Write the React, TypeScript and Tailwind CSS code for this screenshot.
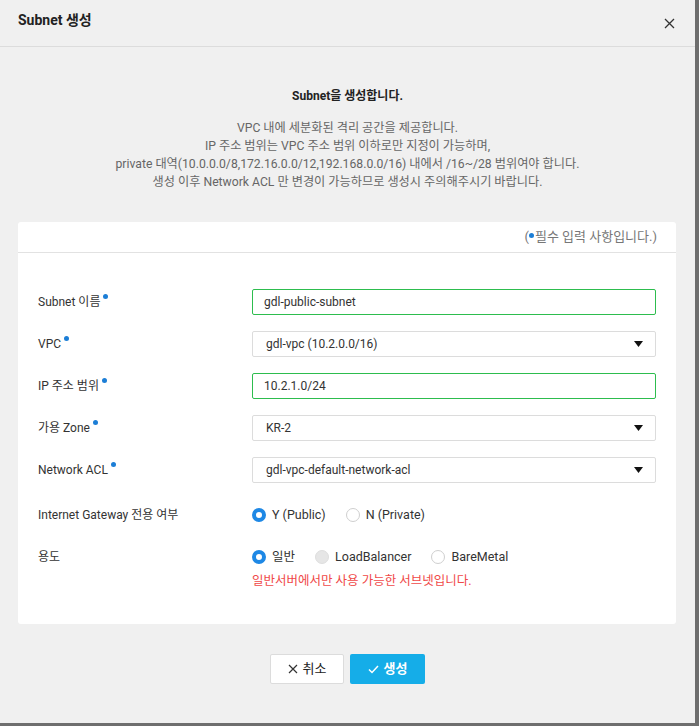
import React from "react";

const Dot = () => (
  <span className="inline-block w-[5px] h-[5px] rounded-full bg-[#1c7ed6] ml-[3px] relative top-[-6px]" />
);

function Label({ text, req }: { text: string; req?: boolean }) {
  return (
    <div className="w-[214px] shrink-0 text-[12px] text-[#333] flex items-center">
      <span>{text}</span>
      {req && <Dot />}
    </div>
  );
}

function TextInput({ value }: { value: string }) {
  return (
    <div className="flex-1 h-[26px] border border-[#2dbd4e] bg-white rounded-[2px] flex items-center px-[11px] text-[12px] text-[#333]">
      {value}
    </div>
  );
}

function Select({ value }: { value: string }) {
  return (
    <div className="flex-1 h-[26px] border border-[#dcdcdc] bg-white rounded-[2px] flex items-center justify-between pl-[13px] pr-[12px] text-[12px] text-[#333]">
      <span>{value}</span>
      <svg width="9" height="6" viewBox="0 0 9 6">
        <path d="M0 0 H9 L4.5 6 Z" fill="#111" />
      </svg>
    </div>
  );
}

function Radio({ state, label }: { state: "on" | "off" | "disabled"; label: string }) {
  const cls =
    state === "on"
      ? "border-[4px] border-[#1e88e5] bg-white"
      : state === "disabled"
      ? "border border-[#dedede] bg-[#e6e6e6]"
      : "border border-[#cfcfcf] bg-white";
  return (
    <div className="flex items-center mr-[20px]">
      <span className={`w-[14px] h-[14px] rounded-full box-border ${cls}`} />
      <span className="ml-[6px] text-[12.5px] text-[#333]">{label}</span>
    </div>
  );
}

export default function App() {
  return (
    <div
      className="w-[699px] h-[726px] bg-[#6e6e6e] overflow-hidden"
      style={{ fontFamily: "Roboto, 'Noto Sans CJK KR', sans-serif" }}
    >
      <div className="w-[695px] h-[723px] bg-[#f0f0f0] flex flex-col">
        <div className="h-[47px] shrink-0 border-b border-[#dcdcdc] flex items-center justify-between pl-[18px] pr-[20px]">
          <span className="text-[14px] font-bold text-[#222] relative top-[-3px]">Subnet 생성</span>
          <svg width="11" height="11" viewBox="0 0 11 11">
            <path d="M1 1 L10 10 M10 1 L1 10" stroke="#333" strokeWidth="1.3" />
          </svg>
        </div>
        <div className="pt-[40px] text-center">
          <div className="text-[12px] leading-[18px] font-bold text-[#222]">Subnet을 생성합니다.</div>
          <div className="mt-[14px] text-[12.2px] leading-[18px] text-[#666]">
            <div>VPC 내에 세분화된 격리 공간을 제공합니다.</div>
            <div>IP 주소 범위는 VPC 주소 범위 이하로만 지정이 가능하며,</div>
            <div>private 대역(10.0.0.0/8,172.16.0.0/12,192.168.0.0/16) 내에서 /16~/28 범위여야 합니다.</div>
            <div>생성 이후 Network ACL 만 변경이 가능하므로 생성시 주의해주시기 바랍니다.</div>
          </div>
        </div>
        <div className="mx-[18px] mt-[31px] w-[658px] bg-white rounded-[3px]">
          <div className="h-[31px] border-b border-[#e2e2e2] flex items-center justify-end pr-[19px] text-[13px] text-[#777]">
            <span>(</span>
            <span className="inline-block w-[5px] h-[5px] rounded-full bg-[#1c7ed6] mr-[1px] relative top-[-2px]" />
            <span>필수 입력 사항입니다.)</span>
          </div>
          <div className="pt-[36px] pl-[20px] pr-[20px] pb-[34px] flex flex-col">
            <div className="flex items-center h-[26px]">
              <Label text="Subnet 이름" req />
              <TextInput value="gdl-public-subnet" />
            </div>
            <div className="flex items-center h-[26px] mt-[16px]">
              <Label text="VPC" req />
              <Select value="gdl-vpc (10.2.0.0/16)" />
            </div>
            <div className="flex items-center h-[26px] mt-[16px]">
              <Label text="IP 주소 범위" req />
              <TextInput value="10.2.1.0/24" />
            </div>
            <div className="flex items-center h-[26px] mt-[16px]">
              <Label text="가용 Zone" req />
              <Select value="KR-2" />
            </div>
            <div className="flex items-center h-[26px] mt-[16px]">
              <Label text="Network ACL" req />
              <Select value="gdl-vpc-default-network-acl" />
            </div>
            <div className="flex items-center h-[26px] mt-[19px]">
              <Label text="Internet Gateway 전용 여부" />
              <div className="flex items-center">
                <Radio state="on" label="Y (Public)" />
                <Radio state="off" label="N (Private)" />
              </div>
            </div>
            <div className="flex items-center h-[26px] mt-[16px]">
              <Label text="용도" />
              <div className="flex items-center">
                <Radio state="on" label="일반" />
                <Radio state="disabled" label="LoadBalancer" />
                <Radio state="off" label="BareMetal" />
              </div>
            </div>
            <div className="flex mt-[2px]">
              <div className="w-[214px] shrink-0" />
              <div className="text-[12.5px] leading-[18px] text-[#f04848]">일반서버에서만 사용 가능한 서브넷입니다.</div>
            </div>
          </div>
        </div>
        <div className="mt-[30px] flex justify-center gap-[6px]">
          <button className="w-[74px] h-[30px] bg-white border border-[#dcdcdc] rounded-[2px] flex items-center justify-center gap-[5px] text-[13px] text-[#222]">
            <svg width="10" height="10" viewBox="0 0 10 10">
              <path d="M1 1 L9 9 M9 1 L1 9" stroke="#333" strokeWidth="1.2" />
            </svg>
            <span>취소</span>
          </button>
          <button className="w-[75px] h-[30px] bg-[#15ade8] rounded-[2px] flex items-center justify-center gap-[5px] text-[13px] font-bold text-white">
            <svg width="11" height="9" viewBox="0 0 11 9">
              <path d="M1 4.5 L4 7.5 L10 1" stroke="#fff" strokeWidth="1.5" fill="none" />
            </svg>
            <span>생성</span>
          </button>
        </div>
      </div>
    </div>
  );
}
